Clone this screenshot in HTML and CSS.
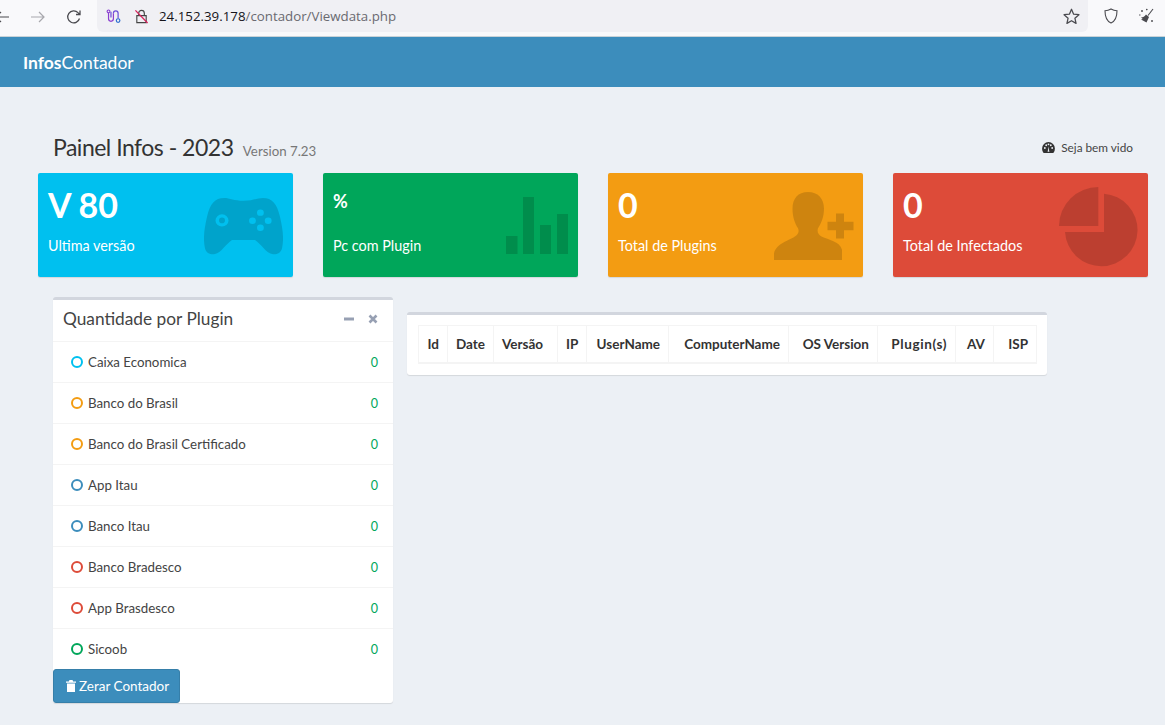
FILE: index.html
```html
<!DOCTYPE html>
<html lang="pt">
<head>
<meta charset="utf-8">
<title>InfosContador</title>
<link rel="stylesheet" href="styles.css">
</head>
<body>
<div class="browser">
  <div class="nav-btns">
    <svg class="ic back" viewBox="0 0 16 16"><path d="M15 8H2M7 3L2 8l5 5" fill="none" stroke="#4a4a4f" stroke-width="1.2"/></svg>
    <svg class="ic fwd" viewBox="0 0 16 16"><path d="M1 8h13M9 3l5 5-5 5" fill="none" stroke="#a8a8ad" stroke-width="1.2"/></svg>
    <svg class="ic reload" viewBox="0 0 16 16"><path d="M13.500 9.500A6 6 0 1 1 12 3.600L14 5.500M14 1.500v4h-4" fill="none" stroke="#4a4a4f" stroke-width="1.3"/></svg>
  </div>
  <div class="urlbar">
    <svg class="ic-perm" viewBox="0 0 16 16"><circle cx="2.700" cy="2.500" r="1.500" fill="none" stroke="#8a3fd0" stroke-width="1.200"/><path d="M2.700 4v6.500a2.600 2.600 0 0 0 5.200 0V4.500" fill="none" stroke="#8a3fd0" stroke-width="1.300"/><path d="M5.300 2.800V9M7.900 4.500a2.500 2.500 0 0 1 5 0V10" fill="none" stroke="#6a4fd8" stroke-width="1.300"/><circle cx="12.900" cy="12.300" r="1.900" fill="none" stroke="#2f6fd0" stroke-width="1.300"/></svg>
    <svg class="ic-lock" viewBox="0 0 16 16"><path d="M5 7V4.500a3 3 0 0 1 6 0V7M3 7h10v7.500H3z" fill="none" stroke="#444" stroke-width="1.200"/><path d="M1.500 1.500l13 13.500" stroke="#d6225c" stroke-width="1.400"/></svg>
    <span class="url"><span class="host">24.152.39.178</span>/contador/Viewdata.php</span>
    <svg class="ic-star" viewBox="0 0 16 16"><path d="M8 1.200l2 4.600 5 .5-3.800 3.300 1.100 4.900L8 12l-4.300 2.500 1.100-4.900L1 6.300l5-.5z" fill="none" stroke="#4a4a4f" stroke-width="1.200" stroke-linejoin="round"/></svg>
  </div>
  <div class="tools">
    <svg class="ic" viewBox="0 0 16 16"><path d="M8 1c2 1.200 4 1.700 6 1.700 0 6-1.500 10.300-6 12.300-4.500-2-6-6.300-6-12.300C4 2.700 6 2.200 8 1z" fill="none" stroke="#4a4a4f" stroke-width="1.100"/></svg>
    <svg class="ic" viewBox="0 0 16 16"><path d="M15 1l-5 6.500" stroke="#4a4a4f" stroke-width="1.100"/><path d="M8 6.500l3 2.500-2.500 5.500L3 11.500l1.800-.6L3 9.500c2 0 3.800-1.300 5-3z" fill="#4a4a4f"/><path d="M3 3h2M4 2v2M1 7h1.500M13 13h2M14 12v2M8 1.500h1.500M8.700.8v1.500" stroke="#4a4a4f" stroke-width=".9"/></svg>
  </div>
</div>

<header class="topbar"><span class="logo"><b>Infos</b>Contador</span></header>

<main class="content">
  <div class="page-head">
    <h1 class="title">Painel Infos - 2023 <small>Version 7.23</small></h1>
    <div class="crumb">
      <svg class="gauge" viewBox="0 0 14 12"><path d="M7 0a7 7 0 0 0-7 7c0 1.800.6 3.500 1.700 5h10.600A7.500 7.500 0 0 0 14 7a7 7 0 0 0-7-7zM3 7.500a1 1 0 1 1 0-2 1 1 0 0 1 0 2zm1.500-3a1 1 0 1 1 0-2 1 1 0 0 1 0 2zM7 3.500a1 1 0 1 1 0-2 1 1 0 0 1 0 2zM8 10.500H6l.4-1.500.6-4 .6 4zm1.500-6a1 1 0 1 1 0-2 1 1 0 0 1 0 2zm1.500 3a1 1 0 1 1 0-2 1 1 0 0 1 0 2z" fill="#333" fill-rule="evenodd"/></svg>
      <span>Seja bem vido</span>
    </div>
  </div>

  <section class="cards">
    <div class="card cyan">
      <h3 class="num">V 80</h3>
      <p class="label">Ultima versão</p>
      <svg class="bg-icon pad" viewBox="0 0 79 61" preserveAspectRatio="none"><path fill-rule="evenodd" d="M20 0C26 0 30 3 39.500 3S53 0 59 0C68 0 73 6 76 20C79 34 80 44 78 54C77 59 72 61 68 60C62 59 57 49 51 45H28C22 49 17 59 11 60C7 61 2 59 1 54C-1 44 0 34 3 20C6 6 11 0 20 0ZM18 17.500a6.500 6.500 0 1 0 0 13 6.500 6.500 0 0 0 0-13ZM18 21a3 3 0 1 1 0 6 3 3 0 0 1 0-6ZM56.400 12.300a3.400 3.400 0 1 0 0 6.800 3.400 3.400 0 0 0 0-6.800ZM48.500 20.900a3.400 3.400 0 1 0 0 6.800 3.400 3.400 0 0 0 0-6.800ZM64.200 20.900a3.400 3.400 0 1 0 0 6.800 3.400 3.400 0 0 0 0-6.800ZM56.400 28.400a3.400 3.400 0 1 0 0 6.800 3.400 3.400 0 0 0 0-6.800Z"/></svg>
    </div>
    <div class="card green">
      <h3 class="num small-num">%</h3>
      <p class="label">Pc com Plugin</p>
      <svg class="bg-icon bars" viewBox="0 0 62 57"><path d="M0 39h11.500v18H0zM17 0h11v57H17zM34 28h11v29H34zM51 17h11v40H51z"/></svg>
    </div>
    <div class="card orange">
      <h3 class="num">0</h3>
      <p class="label">Total de Plugins</p>
      <svg class="bg-icon person" viewBox="0 0 80 73" preserveAspectRatio="none"><path d="M34 0C44 0 50 7 50 18C50 27 47 34 44 39C43 43 44 46 48 48C54 51 66 53 68 62V73H0V66C2 55 16 52 22 47C25 44 25 42 24 39C21 34 18.500 27 18.500 18C18.500 7 24 0 34 0Z"/><path d="M62 23h8v9h9.500v9H70v9h-8v-9h-8.500v-9H62z"/></svg>
    </div>
    <div class="card red">
      <h3 class="num">0</h3>
      <p class="label">Total de Infectados</p>
      <svg class="bg-icon pie" viewBox="0 0 79 80"><path d="M45 6.700A36.300 36.300 0 1 1 6 45H45Z"/><path d="M39.300 0V39H0A39.300 39 0 0 1 39.300 0Z"/></svg>
    </div>
  </section>

  <section class="panels">
    <div class="box list-box">
      <div class="box-head">
        <h3 class="box-title">Quantidade por Plugin</h3>
        <div class="box-tools">
          <svg class="tool" viewBox="0 0 10 10"><path d="M0 3.500h10v3H0z" fill="#97a0b3"/></svg>
          <svg class="tool" viewBox="0 0 10 10"><path d="M1.500 1.500l7 7M8.500 1.500l-7 7" stroke="#97a0b3" stroke-width="2.600"/></svg>
        </div>
      </div>
      <ul class="rows">
        <li class="row"><span class="ring r-cyan"></span><span class="name">Caixa Economica</span><span class="val">0</span></li>
        <li class="row"><span class="ring r-orange"></span><span class="name">Banco do Brasil</span><span class="val">0</span></li>
        <li class="row"><span class="ring r-orange"></span><span class="name">Banco do Brasil Certificado</span><span class="val">0</span></li>
        <li class="row"><span class="ring r-blue"></span><span class="name">App Itau</span><span class="val">0</span></li>
        <li class="row"><span class="ring r-blue"></span><span class="name">Banco Itau</span><span class="val">0</span></li>
        <li class="row"><span class="ring r-red"></span><span class="name">Banco Bradesco</span><span class="val">0</span></li>
        <li class="row"><span class="ring r-red"></span><span class="name">App Brasdesco</span><span class="val">0</span></li>
        <li class="row"><span class="ring r-green"></span><span class="name">Sicoob</span><span class="val">0</span></li>
      </ul>
      <button class="btn" type="button">
        <svg class="trash" viewBox="0 0 10 12"><path d="M3.500 0h3l.7 1.500H10v1.200H0V1.500h2.800zM1 3.500h8V12H1z" fill="#fff"/></svg>
        Zerar Contador
      </button>
    </div>

    <div class="box table-box">
      <table class="data">
        <colgroup>
          <col class="c1"><col class="c2"><col class="c3"><col class="c4"><col class="c5"><col class="c6"><col class="c7"><col class="c8"><col class="c9"><col class="c10">
        </colgroup>
        <thead>
          <tr><th>Id</th><th>Date</th><th class="th-left">Versão</th><th>IP</th><th>UserName</th><th>ComputerName</th><th>OS Version</th><th class="th-wide">Plugin(s)</th><th>AV</th><th>ISP</th></tr>
        </thead>
      </table>
    </div>
  </section>
</main>
</body>
</html>
```
FILE: styles.css
```css
* { box-sizing: border-box; }
html, body { margin: 0; padding: 0; height: 100%; }
body {
  background: #ecf0f5;
  color: #333;
  font-family: "Lato", "Noto Sans", sans-serif;
  overflow: hidden;
}

/* browser chrome */
.browser {
  height: 37px;
  background: #f9f9fb;
  border-bottom: 1px solid #c9d3d8;
  display: flex;
  align-items: flex-start;
}
.nav-btns { width: 97px; height: 36px; position: relative; flex: none; display: flex; align-items: center; }
.ic { width: 16px; height: 16px; flex: none; }
.nav-btns .ic { position: absolute; top: 9px; }
.back { left: -6px; }
.fwd { left: 30px; }
.reload { left: 66px; }
.urlbar {
  width: 991px;
  height: 32px;
  background: #f0f0f4;
  border-radius: 0 0 6px 6px;
  display: flex;
  align-items: center;
  padding: 0 8px 0 9px;
}
.ic-perm { width: 15px; height: 15px; flex: none; margin-right: 13px; }
.ic-lock { width: 15px; height: 15px; flex: none; margin-right: 10px; }
.url { flex: 1; font-family: "Open Sans", sans-serif; font-size: 13.300px; color: #6a6a70; white-space: nowrap; }
.host { color: #15141a; }
.ic-star { width: 17px; height: 17px; flex: none; }
.tools { flex: 1; height: 32px; display: flex; align-items: center; gap: 19px; padding-left: 15px; }

/* header */
.topbar {
  height: 50px;
  background: #3c8dbc;
  color: #fff;
  display: flex;
  align-items: center;
  padding-left: 23px;
  font-size: 17.500px;
}
.logo b { font-weight: 700; }

/* content */
.content { padding: 0 17px 0 38px; }
.page-head {
  height: 86px;
  padding: 42px 15px 0 15px;
  display: flex;
  justify-content: space-between;
  align-items: flex-start;
}
.title { margin: 0; font-size: 23px; font-weight: 400; letter-spacing: -.5px; line-height: 36px; color: #333; white-space: nowrap; }
.title small { font-size: 13.300px; letter-spacing: 0; color: #777; margin-left: 4px; }
.crumb { display: flex; align-items: center; gap: 6px; font-size: 11.800px; color: #444; margin-top: 11px; }
.gauge { width: 13px; height: 11px; }

.cards { display: grid; grid-template-columns: repeat(4, 255px); gap: 30px; }
.card {
  height: 104px;
  border-radius: 2px;
  color: #fff;
  padding: 10px;
  position: relative;
  box-shadow: 0 1px 1px rgba(0, 0, 0, .1);
}
.cyan { background: #00c0ef; }
.green { background: #00a65a; }
.orange { background: #f39c12; }
.red { background: #dd4b39; }
.num { margin: 0; height: 44px; font-size: 34px; font-weight: 700; line-height: 44px; }
.small-num { font-size: 18px; line-height: 36px; }
.label { margin: 9px 0 0; font-size: 14.400px; line-height: 20px; }
.bg-icon { position: absolute; right: 10px; fill: rgba(0, 0, 0, .15); }
.pad { width: 79px; height: 57px; top: 25px; }
.bars { width: 62px; height: 57px; top: 24px; }
.person { width: 80px; height: 68px; top: 19px; right: 9px; }
.pie { width: 79px; height: 80px; top: 14px; }

.panels { display: flex; align-items: flex-start; gap: 14px; margin-top: 20px; padding-left: 15px; }
.box {
  background: #fff;
  border-top: 3px solid #d2d6de;
  border-radius: 3px;
  box-shadow: 0 1px 1px rgba(0, 0, 0, .1);
}
.list-box { width: 340px; height: 406px; }
.box-head {
  height: 42px;
  display: flex;
  align-items: center;
  justify-content: space-between;
  padding: 0 15px 4px 10px;
  border-bottom: 1px solid #f4f4f4;
}
.box-title { margin: 0; font-size: 17.300px; font-weight: 400; color: #444; }
.box-tools { display: flex; gap: 14px; }
.tool { width: 10px; height: 10px; }

.rows { list-style: none; margin: 0; padding: 0; }
.row {
  height: 41px;
  display: flex;
  align-items: center;
  padding: 0 15px 0 18px;
  border-bottom: 1px solid #f4f4f4;
  font-size: 13.300px;
  color: #444;
}
.row:last-child { border-bottom: 0; height: 40px; }
.ring { width: 12px; height: 12px; border-radius: 50%; border: 2px solid; margin-right: 5px; flex: none; }
.r-cyan { border-color: #00c0ef; }
.r-orange { border-color: #f39c12; }
.r-blue { border-color: #3c8dbc; }
.r-red { border-color: #dd4b39; }
.r-green { border-color: #00a65a; }
.name { flex: 1; }
.val { color: #00a65a; font-size: 12.500px; }

.btn {
  display: flex;
  align-items: center;
  gap: 3px;
  width: 127px;
  height: 34px;
  background: #3c8dbc;
  border: 1px solid #367fa9;
  border-radius: 3px;
  color: #fff;
  font-family: inherit;
  font-size: 13.500px;
  padding: 0 0 0 12px;
}
.trash { width: 10px; height: 12px; }

.table-box { width: 640px; height: 63px; margin-top: 15px; padding: 10px 11px; }
.data { border-collapse: collapse; table-layout: fixed; width: 619px; }
.data th {
  height: 37px;
  padding: 0 8px;
  border: 1px solid #f4f4f4;
  border-bottom-width: 2px;
  font-size: 13.500px;
  font-weight: 700;
  color: #333;
  text-align: right;
  white-space: nowrap;
}
.data .th-left { text-align: left; }
.data .th-wide { letter-spacing: .6px; }
.c1 { width: 29px; }
.c2 { width: 46px; }
.c3 { width: 64px; }
.c4 { width: 29px; }
.c5 { width: 82px; }
.c6 { width: 120px; }
.c7 { width: 89px; }
.c8 { width: 78px; }
.c9 { width: 38px; }
.c10 { width: 43px; }
```
